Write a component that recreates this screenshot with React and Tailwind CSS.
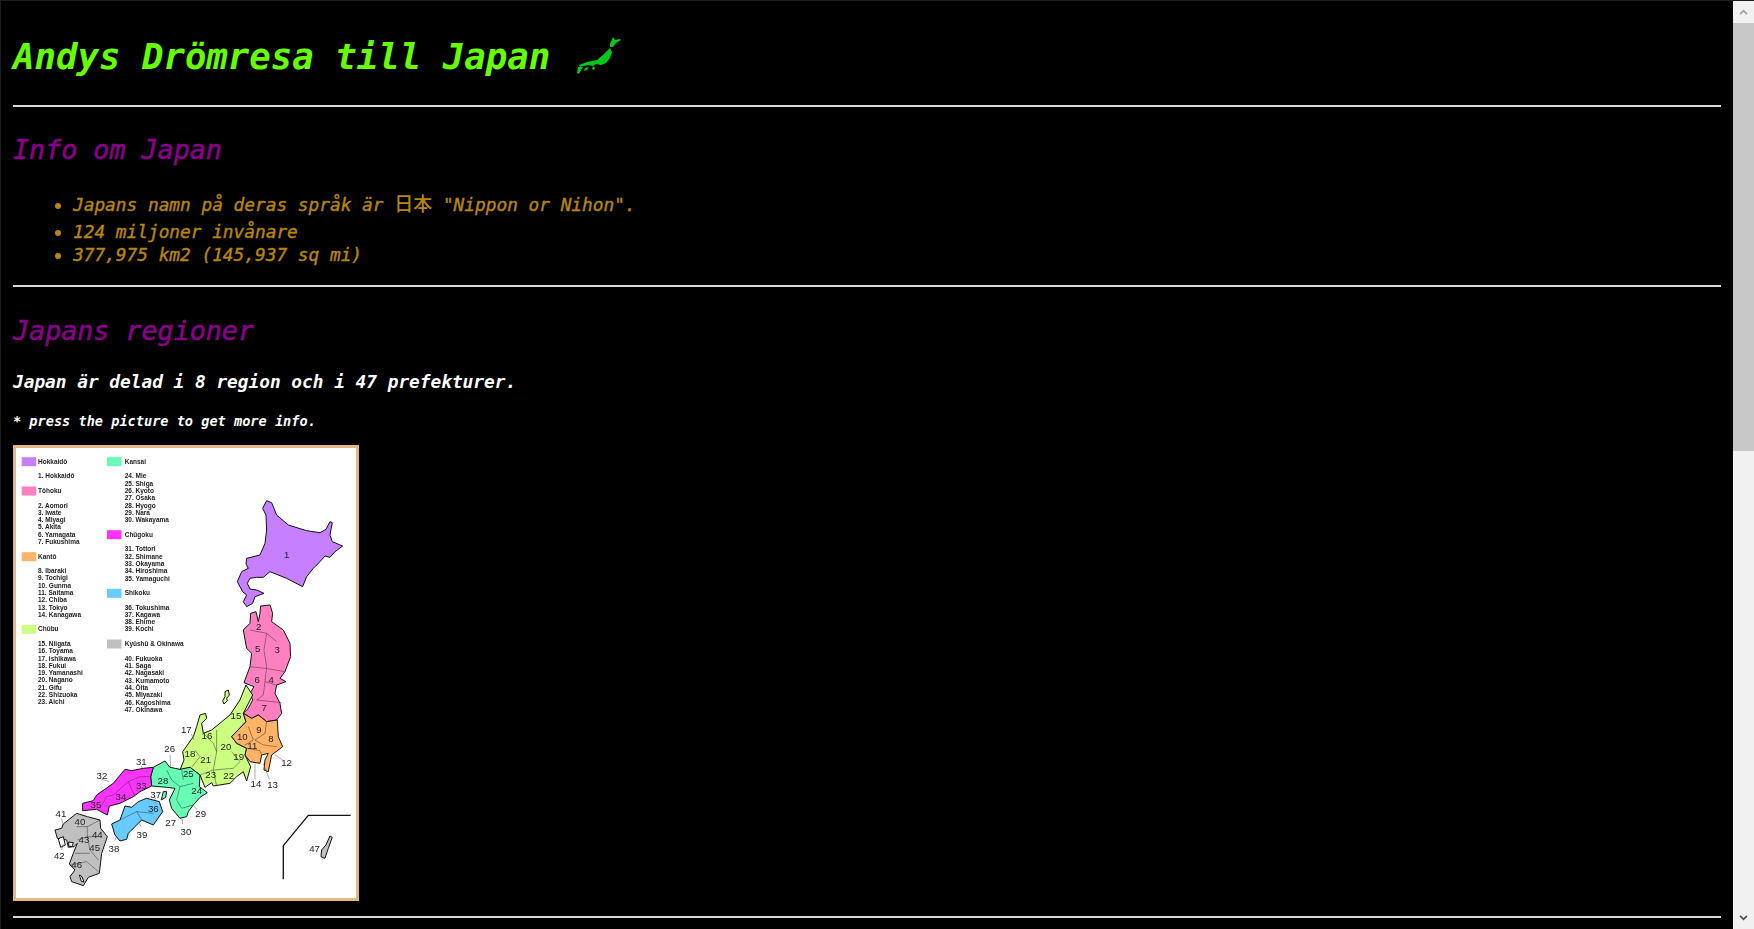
const monoFont = "font-['DejaVu_Sans_Mono','Liberation_Mono',monospace]"

const legendLeft = [
  { y: 463.7, label: 'Hokkaidō', fill: '#c57fff' },
  { y: 478.3, label: '1. Hokkaidō' },
  { y: 493, label: 'Tōhoku', fill: '#ff80c0' },
  { y: 507.7, label: '2. Aomori' },
  { y: 514.8, label: '3. Iwate' },
  { y: 522, label: '4. Miyagi' },
  { y: 529.4, label: '5. Akita' },
  { y: 536.7, label: '6. Yamagata' },
  { y: 544, label: '7. Fukushima' },
  { y: 558.7, label: 'Kantō', fill: '#ffb366' },
  { y: 573.3, label: '8. Ibaraki' },
  { y: 580.4, label: '9. Tochigi' },
  { y: 587.7, label: '10. Gunma' },
  { y: 595, label: '11. Saitama' },
  { y: 602.4, label: '12. Chiba' },
  { y: 609.7, label: '13. Tokyo' },
  { y: 617, label: '14. Kanagawa' },
  { y: 631.4, label: 'Chūbu', fill: '#ccff80' },
  { y: 646, label: '15. Niigata' },
  { y: 653.4, label: '16. Toyama' },
  { y: 660.7, label: '17. Ishikawa' },
  { y: 667.7, label: '18. Fukui' },
  { y: 675, label: '19. Yamanashi' },
  { y: 682.4, label: '20. Nagano' },
  { y: 689.7, label: '21. Gifu' },
  { y: 697, label: '22. Shizuoka' },
  { y: 704.4, label: '23. Aichi' },
]

const legendRight = [
  { y: 463.7, label: 'Kansai', fill: '#66ffb3' },
  { y: 478.3, label: '24. Mie' },
  { y: 485.7, label: '25. Shiga' },
  { y: 493, label: '26. Kyoto' },
  { y: 500.4, label: '27. Osaka' },
  { y: 507.7, label: '28. Hyogo' },
  { y: 515, label: '29. Nara' },
  { y: 522.4, label: '30. Wakayama' },
  { y: 536.7, label: 'Chūgoku', fill: '#ff33ff' },
  { y: 551.3, label: '31. Tottori' },
  { y: 558.7, label: '32. Shimane' },
  { y: 566, label: '33. Okayama' },
  { y: 573.3, label: '34. Hiroshima' },
  { y: 580.7, label: '35. Yamaguchi' },
  { y: 595.3, label: 'Shikoku', fill: '#66ccff' },
  { y: 609.7, label: '36. Tokushima' },
  { y: 617, label: '37. Kagawa' },
  { y: 624.4, label: '38. Ehime' },
  { y: 631.4, label: '39. Kochi' },
  { y: 646, label: 'Kyūshū & Okinawa', fill: '#c0c0c0' },
  { y: 660.7, label: '40. Fukuoka' },
  { y: 668, label: '41. Saga' },
  { y: 675.4, label: '42. Nagasaki' },
  { y: 682.7, label: '43. Kumamoto' },
  { y: 690, label: '44. Ōita' },
  { y: 697.4, label: '45. Miyazaki' },
  { y: 704.7, label: '46. Kagoshima' },
  { y: 712, label: '47. Okinawa' },
]

// shapes are written in the pixel grid of the lower half of the map (3x)
const regions = [
  { fill: '#c57fff', points: '800,-538 815,-532 830,-495 865,-465 920,-448 960,-442 978,-452 990,-475 997,-472 990,-435 997,-415 1028,-402 1005,-385 990,-368 975,-372 960,-355 940,-335 920,-310 908,-280 860,-305 810,-325 790,-308 770,-308 750,-305 742,-290 750,-273 770,-270 792,-260 765,-250 758,-230 740,-220 730,-235 740,-255 728,-265 712,-295 725,-325 745,-335 738,-348 740,-365 780,-375 795,-410 800,-450 798,-495 788,-515' },
  { fill: '#ff80c0', points: '780,-200 782,-222 810,-225 818,-200 815,-175 850,-150 870,-110 872,-70 855,-25 840,-5 858,5 830,15 825,40 840,70 845,100 830,120 800,125 775,105 755,115 730,100 745,85 758,60 750,40 762,20 732,8 750,-40 755,-80 740,-95 730,-150 750,-170 752,-200 768,-205 775,-175' },
  { fill: '#ccff80', points: '738,15 758,45 730,100 738,125 695,170 710,190 740,205 735,225 752,260 740,303 730,275 710,290 690,310 640,318 635,308 615,322 600,285 570,262 540,270 552,240 548,215 580,170 590,140 600,105 617,100 620,115 605,130 610,160 635,150 690,105 720,60' },
  { fill: '#ffb366', points: '730,100 755,115 775,105 800,125 832,120 835,170 848,200 815,225 805,275 792,270 795,240 805,220 785,225 780,250 750,245 735,225 740,205 710,190 695,170 738,125' },
  { fill: '#66ffb3', points: '460,262 495,243 510,262 540,268 570,262 600,285 598,320 622,338 600,352 580,375 565,395 560,410 540,415 515,385 508,360 525,325 500,322 455,318 452,290' },
  { fill: '#ff33ff', points: '460,262 452,290 455,318 420,335 400,350 360,370 328,378 322,405 290,388 248,392 248,370 280,362 290,345 340,310 375,268 395,272 430,265' },
  { fill: '#66ccff', points: '415,365 440,355 478,365 488,395 460,435 425,420 385,460 380,478 360,483 345,465 335,432 360,420 375,378 395,382' },
  { fill: '#c0c0c0', points: '190,432 230,400 262,410 300,420 302,445 322,470 305,520 298,580 265,592 250,617 215,605 210,590 225,570 208,552 220,520 232,490 222,500 205,502 200,480 172,475 165,450 185,445' },
  { fill: '#ffffff', points: '175,476 190,470 196,495 182,502' },
  { fill: '#ffffff', points: '206,486 220,488 216,500 206,498' },
  { fill: '#ffffff', points: '238,585 246,590 252,606 244,604' },
  { fill: '#ccff80', points: '675,35 685,30 688,45 680,55 682,62 672,72 668,62 675,50' },
  { fill: '#66ffb3', points: '490,335 500,335 497,352 484,360' },
  { fill: '#c0c0c0', points: '990,468 997,472 985,505 975,535 963,530 965,510 978,495' },
]

const borders = [
  'M750,-150 L800,-140 L830,-115', 'M800,-140 L792,-90 L800,-40 L795,5', 'M750,-40 L795,-35 L855,-25',
  'M795,5 L790,45 L770,60', 'M795,5 L830,15', 'M770,60 L845,68',
  'M745,140 L760,180 L735,195', 'M800,125 L795,160 L765,180 L790,195 L830,200', 'M740,205 L780,212 L785,225',
  'M650,150 L650,215 L640,270 L650,318', 'M610,160 L640,190 L650,215', 'M585,210 L600,230 L575,262',
  'M600,285 L640,270 L700,265 L720,245 L695,215', 'M500,270 L515,300 L540,320 L580,310', 'M540,320 L530,360 L545,385 L580,375',
  'M545,270 L550,300', 'M340,345 L385,305 L420,290 L455,290', 'M385,305 L405,350', 'M300,385 L320,350 L340,345',
  'M360,420 L410,395 L460,400', 'M425,420 L410,395', 'M230,440 L262,440 L300,420', 'M232,480 L262,470 L270,510 L295,540',
  'M262,440 L262,470 L305,470', 'M225,520 L270,520', 'M210,555 L260,545 L295,575',
]

const leaders = [
  'M574,162 L582,180', 'M510,225 L512,262', 'M424,258 L428,270', 'M305,298 L328,305', 'M468,352 L462,362',
  'M184,416 L190,435', 'M582,378 L590,388', 'M546,415 L548,432', 'M418,425 L422,440', 'M350,468 L344,482',
  'M825,225 L848,240', 'M790,250 L808,298', 'M765,250 L765,298', 'M185,510 L190,492',
]

const numbers = [
  [708, 118, '15'], [621, 178, '16'], [559, 160, '17'], [570, 232, '18'], [716, 240, '19'], [678, 210, '20'],
  [617, 249, '21'], [686, 296, '22'], [632, 295, '23'], [590, 342, '24'], [565, 292, '25'], [509, 217, '26'],
  [512, 438, '27'], [489, 312, '28'], [602, 410, '29'], [558, 466, '30'], [424, 254, '31'], [306, 296, '32'],
  [424, 328, '33'], [363, 360, '34'], [288, 384, '35'], [460, 396, '36'], [467, 354, '37'], [342, 516, '38'],
  [426, 475, '39'], [240, 434, '40'], [183, 412, '41'], [178, 536, '42'], [252, 489, '43'], [292, 475, '44'],
  [284, 512, '45'], [230, 564, '46'], [944, 517, '47'], [777, 159, '9'], [727, 180, '10'], [757, 208, '11'],
  [860, 259, '12'], [818, 325, '13'], [768, 322, '14'], [813, 185, '8'], [793, 93, '7'], [772, 8, '6'],
  [814, 8, '4'], [773, -85, '5'], [832, -80, '3'], [776, -150, '2'], [860, -365, '1'],
]

const legendText = (rows, x, swatchX) =>
  rows.map((row) => (
    <g key={row.label}>
      {row.fill && <rect x={swatchX} y={row.y - 6.5} width="14.5" height="9" fill={row.fill} />}
      <text x={x} y={row.y} fontSize="6.5" fontWeight="700" fill="#1c1c1c">
        {row.label}
      </text>
    </g>
  ))

const RegionMap = () => (
  <div className="w-[346px] h-[456px] border-[3px] border-[#deb887] bg-white">
    <svg
      viewBox="16 448 340 450"
      className="block w-[340px] h-[450px] not-italic blur-[0.3px] font-['Liberation_Sans',sans-serif]"
    >
      {legendText(legendLeft, 38, 21.7)}
      {legendText(legendRight, 124.7, 107)}
      <g transform="translate(0 680) scale(0.3333)">
        {regions.map((region) => (
          <polygon
            key={region.points}
            points={region.points}
            fill={region.fill}
            stroke="#111"
            strokeWidth="3"
            strokeLinejoin="round"
          />
        ))}
        {borders.map((d) => (
          <path key={d} d={d} fill="none" stroke="#333" strokeWidth="1.5" />
        ))}
        {leaders.map((d) => (
          <path key={d} d={d} fill="none" stroke="#555" strokeWidth="1.5" />
        ))}
        <path d="M1052,406 L925,406 L850,497 L850,598" fill="none" stroke="#111" strokeWidth="4" />
        {numbers.map(([x, y, label]) => (
          <text key={label} x={x} y={y} fontSize="29" textAnchor="middle" fill="#222">
            {label}
          </text>
        ))}
      </g>
    </svg>
  </div>
)

const JapanIcon = () => (
  <svg viewBox="0 0 70 60" className="w-[70px] h-[60px] shrink-0">
    <path
      fill="#00c814"
      d="M53,12 L55,15 L60,14 L61,15 L56,18 L53,22 L50,22 L50,19 Z M50,23 L52,27 L50,33 L46,38 L41,40 L36,39 L33,41 L28,40 L24,41 L20,42 L19,40 L27,37 L37,35 L43,30 L47,26 Z"
    />
    <path fill="#00c814" d="M18,42 L23,42 L21,45 L19,49 L17,48 Z M25,43 L29,42 L27,45 L24,46 Z M33,41 L35,43 L34,45 L32,44 Z" />
  </svg>
)

const Scrollbar = () => (
  <aside className="w-[21px] shrink-0 h-full flex flex-col bg-[#f1f1f1]">
    <div className="h-[22px] flex items-center justify-center">
      <svg viewBox="0 0 10 7" className="w-[9px] h-[6px]">
        <path d="M1,6 L5,2 L9,6" fill="none" stroke="#a3a3a3" strokeWidth="2" />
      </svg>
    </div>
    <div className="h-[428px] bg-[#c8c8c8]" />
    <div className="flex-1" />
    <div className="h-[23px] flex items-center justify-center">
      <svg viewBox="0 0 10 7" className="w-[9px] h-[6px]">
        <path d="M1,1 L5,5 L9,1" fill="none" stroke="#505050" strokeWidth="2" />
      </svg>
    </div>
  </aside>
)

const Rule = () => <hr className="border-0 h-[2px] bg-[#d8d8d8] mr-[12px]" />

export default function App() {
  return (
    <div className={`h-screen overflow-hidden flex bg-black border-t border-l border-[#1c1c1c] ${monoFont}`}>
      <main className="flex-1 min-w-0 pl-[12px] pt-[29px] italic">
        {/* Header */}
        <div className="flex items-center h-[54px] mb-[21px]">
          <h1 className="text-[35.7px] leading-[54px] font-bold text-[#66ff00]">Andys Drömresa till Japan</h1>
          <span className="ml-[10px] mb-[4px]">
            <JapanIcon />
          </span>
        </div>
        <Rule />

        {/* Info */}
        <h2 className="mt-[25px] text-[26.7px] leading-[36px] font-normal text-[#8b008b] [-webkit-text-stroke:0.5px_#8b008b]">
          Info om Japan
        </h2>
        <ul className="mt-[21px] list-disc pl-[60px] text-[17.8px] font-normal leading-[23px] text-[#b8860b] [-webkit-text-stroke:0.4px_#b8860b]">
          <li className="leading-[27px] mb-[2px]">
            Japans namn på deras språk är{' '}
            <span className="not-italic font-medium text-[19px] [-webkit-text-stroke:0px] font-['Noto_Sans_CJK_JP',sans-serif]">
              日本
            </span>{' '}
            "Nippon or Nihon".
          </li>
          <li>124 miljoner invånare</li>
          <li>377,975 km2 (145,937 sq mi)</li>
        </ul>
        <div className="mt-[19px]">
          <Rule />
        </div>

        {/* Regioner */}
        <h2 className="mt-[26px] text-[26.7px] leading-[36px] font-normal text-[#8b008b] [-webkit-text-stroke:0.5px_#8b008b]">
          Japans regioner
        </h2>
        <p className="mt-[21px] text-[17.8px] leading-[24px] font-bold text-white">
          Japan är delad i 8 region och i 47 prefekturer.
        </p>
        <p className="mt-[18px] text-[13.6px] leading-[18px] font-bold text-white">
          * press the picture to get more info.
        </p>
        <div className="mt-[15px]">
          <RegionMap />
        </div>
        <div className="mt-[15px]">
          <Rule />
        </div>
      </main>
      <Scrollbar />
    </div>
  )
}
